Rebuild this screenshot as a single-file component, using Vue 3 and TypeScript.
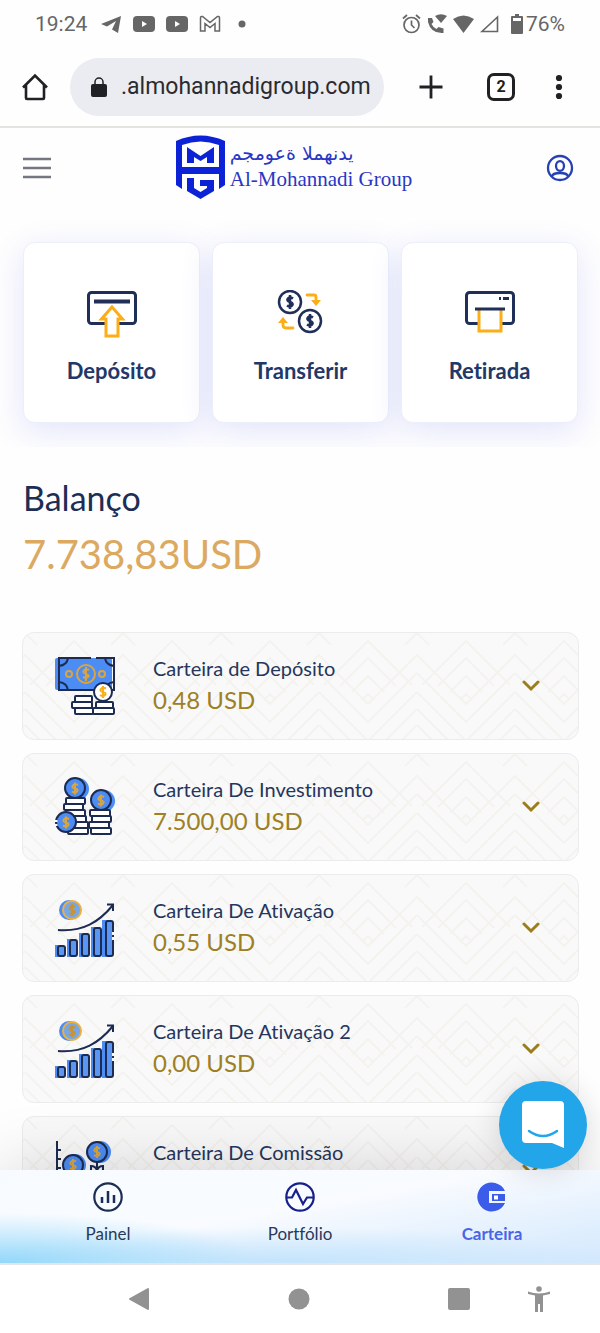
<script setup lang="ts">
import { ref } from 'vue'

type IconName = 'cash' | 'stacks' | 'growth' | 'plant'

interface Wallet {
  title: string
  amount: string
  icon: IconName
}

const address = ref('.almohannadigroup.com')

const wallets: Wallet[] = [
  { title: 'Carteira de Depósito', amount: '0,48 USD', icon: 'cash' },
  { title: 'Carteira De Investimento', amount: '7.500,00 USD', icon: 'stacks' },
  { title: 'Carteira De Ativação', amount: '0,55 USD', icon: 'growth' },
  { title: 'Carteira De Ativação 2', amount: '0,00 USD', icon: 'growth' },
  { title: 'Carteira De Comissão', amount: '', icon: 'plant' },
]
</script>

<template>
  <div class="phone">
    <div class="status">
      <div class="status-side">
        <span class="clock">19:24</span>
        <svg width="22" height="22" viewBox="0 0 22 22"><path d="M1 11 21 3 18 20 12 16.500 16 8 7 13.500Z" fill="#666" /></svg>
        <svg v-for="n in 2" :key="n" width="22" height="16" viewBox="0 0 22 16"><rect width="22" height="16" rx="4" fill="#666" /><path d="M9 5v6l5-3z" fill="#fff" /></svg>
        <svg width="22" height="18" viewBox="0 0 22 18"><path d="M1.500 16V3Q1.500 1 3.500 1.500L11 7.500 18.500 1.500Q20.500 1 20.500 3V16H16V8.500L11 12.500 6 8.500V16Z" fill="none" stroke="#666" stroke-width="1.500" /></svg>
        <svg class="more-dot" width="8" height="8" viewBox="0 0 8 8"><circle cx="4" cy="4" r="3.500" fill="#666" /></svg>
      </div>
      <div class="status-side right">
        <svg width="19" height="20" viewBox="0 0 19 20"><g fill="none" stroke="#666" stroke-width="1.700"><circle cx="9.500" cy="11" r="7.500" /><path d="M9.500 6.500V11l3 3M1 4.500 5 1M18 4.500 14 1" /></g></svg>
        <svg width="20" height="20" viewBox="0 0 20 20"><path d="M1 4h4l1.500 4-2 2q2 4 5 5l2-2 5 1.500V19Q4 20 1 8Z" fill="#666" /><path d="M8 2q6-3.500 12 0l-6 7z" fill="#666" /></svg>
        <svg width="21" height="18" viewBox="0 0 21 18"><path d="M0 4q10.500-7 21 0L10.500 18Z" fill="#666" /></svg>
        <svg class="signal" width="19" height="18" viewBox="0 0 19 18"><path d="M2 16.500H17.500V2Z" fill="none" stroke="#666" stroke-width="1.600" /></svg>
        <svg width="12" height="20" viewBox="0 0 12 20"><path d="M4 0h4v2h3q1 0 1 1v16q0 1-1 1H1q-1 0-1-1V3q0-1 1-1h3z" fill="#666" /><path d="M2 4h8v3H2z" fill="#fff" /></svg>
        <span class="percent">76%</span>
      </div>
    </div>

    <div class="browser">
      <button class="plain" aria-label="Página inicial">
        <svg width="28" height="28" viewBox="0 0 28 28"><path d="M2 14.500 14 2.500 26 14.500M5 12V25Q5 26 6 26H22Q23 26 23 25V12" fill="none" stroke="#202124" stroke-width="2.600" /></svg>
      </button>
      <div class="omnibox">
        <svg width="16" height="20" viewBox="0 0 16 20"><path d="M4 8V5a4 4 0 0 1 8 0v3" fill="none" stroke="#202124" stroke-width="1.500" /><rect y="7" width="16" height="13" rx="2" fill="#202124" /></svg>
        <input v-model="address" type="text" aria-label="Endereço do site" />
      </div>
      <div class="browser-actions">
        <button class="plain" aria-label="Nova guia">
          <svg width="24" height="24" viewBox="0 0 24 24"><path d="M12 .5v23M.5 12h23" stroke="#202124" stroke-width="2.800" /></svg>
        </button>
        <button class="tab-count" aria-label="Guias abertas">2</button>
        <button class="plain" aria-label="Mais opções">
          <svg width="8" height="26" viewBox="0 0 8 26"><g fill="#202124"><circle cx="4" cy="4" r="3.100" /><circle cx="4" cy="13" r="3.100" /><circle cx="4" cy="22" r="3.100" /></g></svg>
        </button>
      </div>
    </div>

    <main class="page">
      <header class="site-header">
        <button class="plain" aria-label="Menu">
          <svg width="28" height="24" viewBox="0 0 28 24"><path d="M0 3h28M0 12h28M0 21h28" stroke="#74777f" stroke-width="2.400" /></svg>
        </button>
        <a class="brand" href="#">
          <svg width="49" height="64" viewBox="0 0 49 64">
            <path d="M0 6Q24.500-5 49 6V50L43 54V39H6V54L0 50ZM6 10V32H43V10Q24.500 3 6 10Z" fill="#0b22d6" fill-rule="evenodd" />
            <path d="M11 12 24.500 21 38 12V28H31V22L24.500 26 18 22V28H11Z" fill="#0b22d6" />
            <path d="M11 43H18V53L24.500 57 31 53V51H24V45H38V56L24.500 64 11 56Z" fill="#0b22d6" />
          </svg>
          <span class="brand-text">
            <span class="brand-ar" lang="ar" dir="rtl">يدنهملا ةعومجم</span>
            <span class="brand-en">Al-Mohannadi Group</span>
          </span>
        </a>
        <button class="plain user" aria-label="Perfil">
          <svg width="28" height="28" viewBox="0 0 28 28"><g fill="none" stroke="#2541b2" stroke-width="2.300"><circle cx="14" cy="14" r="12" /><ellipse cx="14" cy="12" rx="4" ry="4.800" /><path d="M6 22.500Q6.500 19 14 19T22 22.500" /></g></svg>
        </button>
      </header>

      <section class="actions">
        <button class="action">
          <svg width="50" height="48" viewBox="0 0 50 48">
            <rect x="1.500" y="2.500" width="47" height="31" rx="3" fill="none" stroke="#1f2f57" stroke-width="3" />
            <path d="M7 11.500H43" stroke="#1f2f57" stroke-width="4" />
            <path d="M25 17 14.500 29H19V46H31V29H35.500Z" fill="#fff" stroke="#fbae17" stroke-width="3" />
          </svg>
          <span>Depósito</span>
        </button>
        <button class="action">
          <svg width="50" height="48" viewBox="0 0 50 48">
            <g fill="none" stroke="#1f2f57" stroke-width="2.500">
              <circle cx="14" cy="12" r="11" /><circle cx="34" cy="31" r="11" />
              <path d="M17 8.500Q14 6.500 12 8.500T14 12 16 15.500 11 15.500M14 5v14M37 27.500Q34 25.500 32 27.500T34 31 36 34.500 31 34.500M34 24v14" />
            </g>
            <g fill="none" stroke="#fbae17" stroke-width="2.800" stroke-linecap="round"><path d="M31 5H38Q40 5 40 7V12M17 38H10Q7 38 7 35V32" /></g>
            <path d="M35 10h10l-5 6zM2 33h10l-5-6z" fill="#fbae17" />
          </svg>
          <span>Transferir</span>
        </button>
        <button class="action">
          <svg width="50" height="48" viewBox="0 0 50 48">
            <rect x="1.500" y="2.500" width="47" height="31" rx="3" fill="none" stroke="#1f2f57" stroke-width="3" />
            <path d="M14 20V41H36V20" fill="#fff" stroke="#fbae17" stroke-width="3" />
            <path d="M10 19H40M34 8.500H36M38 8.500H44" stroke="#1f2f57" stroke-width="3" />
          </svg>
          <span>Retirada</span>
        </button>
      </section>

      <section class="balance">
        <h1>Balanço</h1>
        <p>7.738,83USD</p>
      </section>

      <section class="wallets">
        <button v-for="wallet in wallets" :key="wallet.title" class="wallet">
          <svg v-if="wallet.icon === 'cash'" width="60" height="60" viewBox="0 0 60 60">
            <rect x="0" y="2" width="57" height="32" rx="2" fill="#4c8df5" />
            <g fill="none" stroke="#1c2b52" stroke-width="2">
              <path d="M36 2H4V34H59V2H41" />
              <path d="M4 10Q12 9 13 2M4 26Q12 27 13 34M59 10Q51 9 50 2M50 34Q51 27 59 26" />
            </g>
            <g fill="none" stroke="#dba53d" stroke-width="2">
              <circle cx="31" cy="18" r="9" /><circle cx="14" cy="18" r="3" /><circle cx="47" cy="18" r="3" />
              <path d="M34 14Q31 12.500 29 14.500T31 18 33 21 28 21M31 11v14" />
            </g>
            <g fill="#fff" stroke="#1c2b52" stroke-width="2"><rect x="20" y="40" width="17" height="6" rx="1" /><rect x="17" y="46" width="20" height="6" rx="1" /><rect x="20" y="52" width="18" height="6" rx="1" /><rect x="41" y="46" width="17" height="6" rx="1" /><rect x="38" y="52" width="21" height="6" rx="1" /><circle cx="48" cy="36" r="9" /></g>
            <path d="M51 32.500Q48 31 46 33T48 36 50 39 45 39M48 30v12" fill="none" stroke="#fbae17" stroke-width="2" />
          </svg>
          <svg v-else-if="wallet.icon === 'stacks'" width="60" height="60" viewBox="0 0 60 60">
            <g fill="#4c8df5"><circle cx="23" cy="12" r="11" /><circle cx="49" cy="24" r="11" /><circle cx="15" cy="46" r="10" /></g>
            <g fill="#fff" stroke="#1c2b52" stroke-width="2"><rect x="11" y="21" width="19" height="6" rx="1" /><rect x="9" y="27" width="19" height="6" rx="1" /><rect x="11" y="33" width="19" height="6" rx="1" /><rect x="14" y="39" width="17" height="6" rx="1" /><rect x="16" y="45" width="17" height="6" rx="1" /><rect x="13" y="51" width="20" height="6" rx="1" /><rect x="35" y="33" width="20" height="6" rx="1" /><rect x="37" y="39" width="19" height="6" rx="1" /><rect x="34" y="45" width="20" height="6" rx="1" /><rect x="36" y="51" width="20" height="6" rx="1" /></g>
            <g fill="#4c8df5" stroke="#1c2b52" stroke-width="2"><circle cx="20" cy="11" r="10" /><circle cx="46" cy="23" r="10" /><circle cx="11" cy="45" r="10" /></g>
            <path d="M23 8Q20 6.500 18 8.500T20 11.500 22 14.500 17 14.500M20 5.500v12M49 20Q46 18.500 44 20.500T46 23.500 48 26.500 43 26.500M46 17.500v12M14 42Q11 40.500 9 42.500T11 45.500 13 48.500 8 48.500M11 39.500v12" fill="none" stroke="#dba53d" stroke-width="2" />
            <path d="M1 49V41" stroke="#f9f9f9" stroke-width="3" stroke-dasharray="2 2" />
          </svg>
          <svg v-else-if="wallet.icon === 'growth'" width="60" height="60" viewBox="0 0 60 60">
            <circle cx="14" cy="12" r="10" fill="#4c8df5" />
            <circle cx="17" cy="12" r="9" fill="#77a7e6" stroke="#e9b044" stroke-width="2" />
            <path d="M20 8.500Q17 7 15 9T17 12 19 15 14 15M17 6v12" fill="none" stroke="#c9942f" stroke-width="2" />
            <path d="M3 32C28 34 44 24 58 7M52 6.500H58V13" fill="none" stroke="#1c2b52" stroke-width="2" />
            <path d="M0 47h9v12H0zM12 41h9v18h-9zM24 35h9v24h-9zM36 29h9v30h-9zM47 22h9v37h-9z" fill="#4c8df5" />
            <g fill="#5b97f2" stroke="#1c2b52" stroke-width="2"><rect x="3" y="48" width="7" height="10" rx="2" /><rect x="15" y="42" width="7" height="16" rx="2" /><rect x="27" y="36" width="7" height="22" rx="2" /><rect x="39" y="30" width="7" height="28" rx="2" /></g>
            <path d="M51 23h6v34h-6z" fill="#5b97f2" />
            <path d="M58 34V25Q58 23 56 23H53Q51 23 51 25V56Q51 58 53 58H56Q58 58 58 56V42M58 37V39" fill="none" stroke="#1c2b52" stroke-width="2" />
          </svg>
          <svg v-else width="60" height="60" viewBox="0 0 60 60">
            <g fill="none" stroke="#1c2b52" stroke-width="2"><path d="M2 1V58H58M2 10H6M2 19H6M2 28H6" /></g>
            <g fill="#4c8df5"><circle cx="45" cy="12" r="11" /><circle cx="20" cy="25" r="11" /></g>
            <g fill="#4c8df5" stroke="#1c2b52" stroke-width="2"><circle cx="42" cy="12" r="10" /><circle cx="18" cy="25" r="10" /></g>
            <path d="M42 22V50M36 32V26Q41 26 42 31Q43 26 48 26V32" fill="none" stroke="#1c2b52" stroke-width="2" />
            <path d="M45 8.500Q42 7 40 9T42 12 44 15 39 15M42 6v12M21 21.500Q18 20 16 22T18 25 20 28 15 28M18 19v12" fill="none" stroke="#dba53d" stroke-width="2" />
          </svg>
          <span class="wallet-text">
            <span class="wallet-title">{{ wallet.title }}</span>
            <span class="wallet-amount">{{ wallet.amount }}</span>
          </span>
          <svg width="18" height="12" viewBox="0 0 18 12"><path d="M2 2 9 9 16 2" fill="none" stroke="#9a7d1c" stroke-width="3" stroke-linecap="round" /></svg>
        </button>
      </section>
    </main>

    <div class="dock">
      <button class="chat" aria-label="Abrir chat">
        <svg width="42" height="48" viewBox="0 0 42 48"><path d="M4 0H38Q42 0 42 4V47L30 42H4Q0 42 0 38V4Q0 0 4 0Z" fill="#fff" /><path d="M7 30Q21 40 35 30" fill="none" stroke="#23a5ea" stroke-width="2.500" stroke-linecap="round" /></svg>
      </button>
      <nav class="tabs" aria-label="Principal">
        <a href="#">
          <svg width="30" height="30" viewBox="0 0 30 30"><g fill="none" stroke="#1b2c55" stroke-width="2.200"><circle cx="15" cy="15" r="13.700" /><path d="M9 15v6M15 9v12M21 13v8" stroke-width="2.500" /></g></svg>
          <span>Painel</span>
        </a>
        <a href="#">
          <svg width="30" height="30" viewBox="0 0 30 30"><g fill="none" stroke="#16208c" stroke-width="2.200"><circle cx="15" cy="15" r="13.700" /><path d="M2 15.500H7L11 8 18 22 22 15.500H28" /></g></svg>
          <span>Portfólio</span>
        </a>
        <a class="current" href="#" aria-current="page">
          <svg width="30" height="30" viewBox="0 0 30 30"><path d="M28 9A14.500 14.500 0 1 0 28 21H12V9Z" fill="#3b5bea" /><path d="M15 12H28V19H15Z" fill="#3b5bea" /><path d="M17 13.500h4v4h-4z" fill="#fff" /></svg>
          <span>Carteira</span>
        </a>
      </nav>
    </div>

    <div class="system">
      <button class="plain" aria-label="Voltar"><svg width="24" height="24" viewBox="0 0 24 24"><path d="M3 12 21 2V22Z" fill="#929292" stroke="#929292" stroke-width="2" stroke-linejoin="round" /></svg></button>
      <button class="plain" aria-label="Início"><svg width="24" height="24" viewBox="0 0 24 24"><circle cx="12" cy="12" r="10.500" fill="#929292" /></svg></button>
      <button class="plain" aria-label="Recentes"><svg width="24" height="24" viewBox="0 0 24 24"><rect x="1" y="1" width="22" height="22" rx="2" fill="#929292" /></svg></button>
      <button class="plain" aria-label="Acessibilidade"><svg width="24" height="28" viewBox="0 0 24 28"><circle cx="12" cy="4" r="2.800" fill="#929292" /><path d="M1 6.500Q12 10.500 23 6.500V9L16 10.500V27H13V19H11V27H8V10.500L1 9Z" fill="#929292" /></svg></button>
    </div>
  </div>
</template>

<style>
html,
body {
  background: #fff;
}
</style>

<style scoped>
.phone {
  display: flex;
  flex-direction: column;
  height: 100vh;
  background: #fefefe;
  font-family: Lato, "Open Sans", sans-serif;
  font-variant-ligatures: no-common-ligatures;
  color: #1c2e56;
}
.phone * {
  box-sizing: border-box;
}
svg {
  display: block;
  flex: none;
}
button {
  font-family: inherit;
  font-variant-ligatures: inherit;
  color: inherit;
  cursor: pointer;
}
.plain {
  padding: 0;
  border: 0;
  background: none;
}
a {
  color: inherit;
  text-decoration: none;
}

.status {
  flex: none;
  display: flex;
  justify-content: space-between;
  align-items: center;
  height: 47px;
  padding: 0 35px;
  font: 21px/24px Roboto, sans-serif;
  color: #666;
}
.status-side {
  display: flex;
  align-items: center;
  gap: 11px;
}
.status-side.right {
  gap: 6px;
}
.clock {
  margin-right: 2px;
}
.more-dot {
  margin-left: 6px;
}
.signal {
  margin-right: 6px;
}
.percent {
  margin-left: -3px;
}

.browser {
  flex: none;
  display: flex;
  align-items: center;
  height: 81px;
  padding: 0 37px 0 21px;
  border-bottom: 2px solid #e3e3e0;
}
.omnibox {
  flex: 1;
  min-width: 0;
  display: flex;
  align-items: center;
  gap: 14px;
  height: 58px;
  margin-left: 21px;
  padding: 0 8px 0 21px;
  border-radius: 29px;
  background: #ebecf1;
}
.omnibox input {
  flex: 1;
  min-width: 0;
  padding: 0;
  border: 0;
  outline: 0;
  background: none;
  font: 23px/30px Roboto, sans-serif;
  color: #2a2b2e;
}
.browser-actions {
  display: flex;
  align-items: center;
  gap: 40px;
  margin-left: 35px;
}
.tab-count {
  width: 28px;
  height: 28px;
  margin-left: 4px;
  padding: 0;
  border: 3px solid #202124;
  border-radius: 7px;
  background: none;
  font: 700 16px/22px Roboto, sans-serif;
  color: #202124;
}

.page {
  flex: 1;
  min-height: 0;
  overflow: hidden;
}
.site-header {
  display: flex;
  align-items: center;
  justify-content: space-between;
  height: 80px;
  padding: 0 17px 0 23px;
}
.user {
  display: flex;
  justify-content: center;
  width: 46px;
}
.brand {
  display: flex;
  gap: 5px;
  padding-bottom: 2px;
  color: #2a36c4;
}
.brand-text {
  display: flex;
  flex-direction: column;
  align-items: flex-start;
  padding-top: 4px;
}
.brand-ar {
  font: 19px/28px "DejaVu Sans", sans-serif;
}
.brand-en {
  font: 21px/24px "Liberation Serif", serif;
}

.actions {
  display: grid;
  grid-template-columns: repeat(3, 1fr);
  gap: 12px;
  overflow: hidden;
  padding: 34px 22px 24px 23px;
}
.action {
  display: flex;
  flex-direction: column;
  align-items: center;
  gap: 19px;
  height: 181px;
  padding: 47px 0 0;
  border: 1px solid #eceefa;
  border-radius: 12px;
  background: #fff;
  box-shadow: 0 8px 32px rgba(75, 95, 230, 0.16);
  font-size: 22px;
  font-weight: 700;
  line-height: 28px;
  color: #213868;
}

.balance {
  padding: 29px 23px 0;
}
.balance h1 {
  margin: 0;
  font-size: 34px;
  font-weight: 400;
  line-height: 44px;
}
.balance p {
  margin: 8px 0 0;
  font-size: 40px;
  line-height: 52px;
  color: #dba960;
}

.wallets {
  display: grid;
  gap: 13px;
  padding: 52px 21px 0 22px;
}
.wallet {
  display: flex;
  align-items: center;
  gap: 38px;
  height: 108px;
  padding: 0 38px 0 32px;
  border: 1px solid #ececec;
  border-radius: 12px;
  background: #f9f9f9 url("data:image/svg+xml,%3Csvg xmlns='http://www.w3.org/2000/svg' width='98' height='108' fill='none' stroke='%23f4f3ef' stroke-width='2'%3E%3Cpath d='M-2 24 0 22 49 71 98 22 100 24M0 40 49 89 98 40M0 59 49 108 98 59M0 76 32 108M98 76 66 108M0 92 16 108M98 92 82 108M5 52 49 8 93 52M21 53 49 25 77 53M33 59 49 43 65 59M43 67 49 61 55 67M0 0 12 12M98 0 86 12'/%3E%3C/svg%3E") 2px 0;
  text-align: left;
}
.wallet-text {
  flex: 1;
  display: flex;
  flex-direction: column;
  padding-bottom: 4px;
}
.wallet-title {
  font-size: 20px;
  line-height: 32px;
  color: #25365d;
}
.wallet-amount {
  min-height: 32px;
  font-size: 24px;
  line-height: 32px;
  color: #9d8023;
}

.dock {
  position: relative;
  flex: none;
}
.chat {
  position: absolute;
  z-index: 1;
  right: 13px;
  bottom: calc(100% + 1px);
  display: flex;
  align-items: center;
  justify-content: center;
  width: 88px;
  height: 88px;
  padding: 0;
  border: 0;
  border-radius: 50%;
  background: #23a5ea;
  box-shadow: 0 2px 30px rgba(0, 0, 0, 0.14);
}

.tabs {
  display: flex;
  height: 93px;
  padding: 0 12px;
  background:
    radial-gradient(ellipse 260px 50px at 0 100%, rgba(137, 212, 250, 0.9), rgba(137, 212, 250, 0)),
    radial-gradient(ellipse 340px 36px at 46% 100%, rgba(185, 224, 252, 0.8), rgba(185, 224, 252, 0)),
    linear-gradient(170deg, #f7fbff 0%, #f9fbff 45%, #d3e8fd 100%);
  box-shadow: 0 0 70px rgba(0, 0, 0, 0.16);
}
.tabs a {
  flex: 1;
  display: flex;
  flex-direction: column;
  align-items: center;
  gap: 10px;
  padding-top: 12px;
  font-size: 17px;
  line-height: 24px;
  color: #2a395a;
}
.tabs .current {
  font-weight: 700;
  color: #4a65e6;
}

.system {
  position: relative;
  flex: none;
  display: grid;
  grid-template-columns: 160fr 160fr 80fr 24px;
  align-items: center;
  justify-items: start;
  height: 70px;
  padding: 0 49px 0 127px;
  border-top: 2px solid #e4e6e9;
  background: #fff;
}
</style>
